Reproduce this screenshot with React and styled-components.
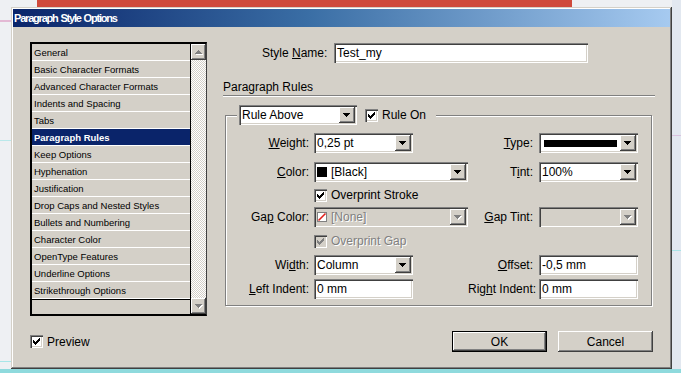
import React from 'react';
import styled, { createGlobalStyle, css } from 'styled-components';

const Global = createGlobalStyle`
  html, body { margin: 0; padding: 0; }
  body {
    width: 681px; height: 373px; overflow: hidden;
    background: #eceff2;
    font-family: "Liberation Sans", Arial, sans-serif;
  }
`;

const sunken = css`
  box-shadow: inset 1px 1px #808080, inset 2px 2px #404040, inset -1px -1px #fff, inset -2px -2px #d4d0c8;
`;
const raised = css`
  box-shadow: inset -1px -1px #404040, inset 1px 1px #fff, inset -2px -2px #808080, inset 2px 2px #d4d0c8;
`;
const disabledText = css`
  color: #808080;
  text-shadow: 1px 1px 0 #fff;
`;

const Desktop = styled.div`
  width: 681px; height: 373px; box-sizing: border-box; overflow: hidden;
  padding: 7px 9px 4px 11px;
  background:
    linear-gradient(#cf4a3c, #cf4a3c) 37px 0 / 535px 7px no-repeat,
    linear-gradient(#9a9a9a, #9a9a9a) 360px 0 / 1px 7px no-repeat,
    linear-gradient(#8fdadd, #8fdadd) 0 369px / 100% 4px no-repeat,
    linear-gradient(#a8e6e8, #a8e6e8) 0 361px / 11px 1px no-repeat,
    linear-gradient(#e3b9d4, #e3b9d4) 0 20px / 11px 2px no-repeat,
    linear-gradient(#b9e8ea, #b9e8ea) 0 140px / 11px 1px no-repeat,
    linear-gradient(#d9c3df, #d9c3df) 672px 135px / 9px 1px no-repeat,
    linear-gradient(#a9e3e6, #a9e3e6) 672px 250px / 9px 1px no-repeat,
    linear-gradient(to right, #eef0f3 0 672px, #e2e8f0 672px);
`;

const Window = styled.div`
  height: 100%; box-sizing: border-box;
  background: #d4d0c8;
  padding: 2px;
  display: flex; flex-direction: column;
  box-shadow: inset -1px -1px #404040, inset 1px 1px #d4d0c8, inset -2px -2px #808080, inset 2px 2px #fff;
`;

const TitleBar = styled.div`
  height: 18px; flex: none;
  display: flex; align-items: center;
  padding-left: 1px;
  background: linear-gradient(to right, #0a246a, #3a6ea5 45%, #a6caf0);
  color: #fff;
  font-weight: bold; font-size: 11px; letter-spacing: -1.2px; word-spacing: 1px;
`;

const Body = styled.div`
  flex: 1;
  padding: 15px 15px 0 17px;
  display: flex; flex-direction: column;
  font-size: 12px; color: #000;
`;

const Main = styled.div`
  display: flex; align-items: flex-start;
`;

const CategoryList = styled.div`
  width: 177px; height: 274px; box-sizing: border-box; flex: none;
  border: 2px solid #000; border-right: 1px solid #404040;
  display: flex;
`;

const ListItems = styled.div`
  width: 158px; border-right: 1px solid #000;
  display: flex; flex-direction: column;
`;

const ListItem = styled.div`
  height: 16px; flex: none;
  border-bottom: 1px solid #fff;
  padding-left: 2px;
  display: flex; align-items: center;
  font-size: 9.5px; white-space: nowrap;
  background: ${p => (p.$selected ? '#0a246a' : '#d4d0c8')};
  color: ${p => (p.$selected ? '#fff' : '#000')};
  font-weight: ${p => (p.$selected ? 'bold' : 'normal')};
`;

const ListFiller = styled.div`
  flex: 1; border-top: 1px solid #000;
`;

const ScrollTrack = styled.div`
  width: 15px;
  display: flex; flex-direction: column; justify-content: space-between;
  background: repeating-conic-gradient(#d4d0c8 0 25%, #fff 0 50%) 0 0 / 2px 2px;
`;

const ScrollButton = styled.div`
  height: 16px; background: #d4d0c8;
  display: flex; align-items: center; justify-content: center;
  ${raised}
`;

const RightPane = styled.div`
  width: 432px; margin-left: 16px;
  display: flex; flex-direction: column;
`;

const NameRow = styled.div`
  display: flex; align-items: center;
  margin-top: 1px; padding-left: 39px;
`;

const NameLabel = styled.span`
  width: 72px; white-space: nowrap;
`;

const Field = styled.div`
  position: relative;
  width: ${p => p.$w}px; height: 20px; box-sizing: border-box;
  padding: 2px 2px 2px 3px;
  display: flex; align-items: center;
  background: ${p => (p.$disabled ? '#d4d0c8' : '#fff')};
  white-space: nowrap;
  ${sunken}
`;

const FieldValue = styled.span`
  flex: 1; display: flex; align-items: center; gap: 4px;
  ${p => p.$disabled && disabledText}
`;

const DropButton = styled.div`
  width: 16px; height: 16px; flex: none;
  background: #d4d0c8;
  display: flex; align-items: center; justify-content: center;
  ${raised}
`;

const Swatch = styled.span`
  width: 10px; height: 10px; box-sizing: border-box; flex: none;
  background: ${p => p.$color};
  border: 1px solid #000;
  display: inline-flex;
`;

const TypeLine = styled.span`
  flex: 1; height: 7px; background: #000; margin: 0 3px 0 2px;
`;

const SectionHeading = styled.div`
  margin-top: 17px; height: 15px; line-height: 15px;
`;

const EtchedLine = styled.div`
  height: 1px; background: #808080; border-bottom: 1px solid #fff;
`;

const GroupBox = styled.div`
  margin: 18px 3px 0 2px;
  border: 1px solid #808080;
  box-shadow: inset 1px 1px #fff, 1px 1px #fff;
  padding-bottom: 6px;
`;

const GroupLegend = styled.div`
  display: flex; align-items: center; gap: 8px;
  width: fit-content;
  margin: -11px 0 0 11px;
  padding: 0 10px 0 2px;
  background: #d4d0c8;
`;

const FormRow = styled.div`
  display: grid;
  grid-template-columns: 88px 154px 71px 99px;
  align-items: center;
  height: ${p => p.$h || 20}px;
  margin-top: ${p => p.$mt || 0}px;
`;

const Label = styled.span`
  text-align: right; white-space: nowrap;
  padding-right: ${p => p.$pr || 5}px;
`;

const CheckRow = styled.label`
  display: inline-flex; align-items: center; gap: 4px;
  white-space: nowrap;
  ${p => p.$disabled && disabledText}
`;

const CheckBox = styled.span`
  width: 13px; height: 13px; box-sizing: border-box; flex: none;
  display: inline-flex; align-items: center; justify-content: center;
  background: ${p => (p.$disabled ? '#d4d0c8' : '#fff')};
  ${sunken}
`;

const Footer = styled.div`
  margin-top: 15px; padding-right: 2px;
  display: flex; align-items: center; justify-content: space-between;
  height: 21px;
`;

const Buttons = styled.div`
  display: flex; gap: 11px;
`;

const Button = styled.div`
  width: 95px; height: 21px; box-sizing: border-box;
  display: flex; align-items: center; justify-content: center;
  background: #d4d0c8;
  ${p =>
    p.$default
      ? css`
          border: 1px solid #000;
          ${raised}
        `
      : raised}
`;

const Arrow = ({ disabled }) => (
  <svg width="8" height="5" viewBox="0 0 8 5">
    {disabled && <path d="M1 1h7v1H1zM2 2h5v1H2zM3 3h3v1H3zM4 4h1v1H4z" fill="#fff" />}
    <path d="M0 0h7v1H0zM1 1h5v1H1zM2 2h3v1H2zM3 3h1v1H3z" fill={disabled ? '#808080' : '#000'} />
  </svg>
);

const UpArrow = () => (
  <svg width="8" height="5" viewBox="0 0 8 5">
    <path d="M4 1h1v1H4zM3 2h3v1H3zM2 3h5v1H2zM1 4h7v1H1z" fill="#fff" />
    <path d="M3 0h1v1H3zM2 1h3v1H2zM1 2h5v1H1zM0 3h7v1H0z" fill="#808080" />
  </svg>
);

const Check = ({ disabled }) => (
  <svg width="7" height="7" viewBox="0 0 7 7">
    <path
      d="M6 0h1v1H6zM5 1h2v1H5zM0 2h1v1H0zM4 2h3v1H4zM0 3h2v1H0zM3 3h3v1H3zM0 4h5v1H0zM1 5h3v1H1zM2 6h1v1H2z"
      fill={disabled ? '#808080' : '#000'}
    />
  </svg>
);

const NoneSwatch = () => (
  <svg width="10" height="10" viewBox="0 0 10 10">
    <rect x="0.5" y="0.5" width="9" height="9" fill="#fff" stroke="#808080" />
    <path d="M1.5 8.5L8.5 1.5" stroke="#e0201c" strokeWidth="1.6" />
  </svg>
);

const Checkbox = ({ checked, disabled, children }) => (
  <CheckRow $disabled={disabled}>
    <CheckBox $disabled={disabled}>{checked && <Check disabled={disabled} />}</CheckBox>
    {children}
  </CheckRow>
);

const Select = ({ w, disabled, children }) => (
  <Field $w={w} $disabled={disabled}>
    <FieldValue $disabled={disabled}>{children}</FieldValue>
    <DropButton>
      <Arrow disabled={disabled} />
    </DropButton>
  </Field>
);

const TextBox = ({ w, children }) => (
  <Field $w={w}>
    <FieldValue>{children}</FieldValue>
  </Field>
);

const categories = [
  'General',
  'Basic Character Formats',
  'Advanced Character Formats',
  'Indents and Spacing',
  'Tabs',
  'Paragraph Rules',
  'Keep Options',
  'Hyphenation',
  'Justification',
  'Drop Caps and Nested Styles',
  'Bullets and Numbering',
  'Character Color',
  'OpenType Features',
  'Underline Options',
  'Strikethrough Options',
];

export default function App() {
  return (
    <>
      <Global />
      <Desktop>
        <Window>
          <TitleBar>Paragraph Style Options</TitleBar>
          <Body>
            <Main>
              <CategoryList>
                <ListItems>
                  {categories.map(c => (
                    <ListItem key={c} $selected={c === 'Paragraph Rules'}>
                      {c}
                    </ListItem>
                  ))}
                  <ListFiller />
                </ListItems>
                <ScrollTrack>
                  <ScrollButton>
                    <UpArrow />
                  </ScrollButton>
                  <ScrollButton>
                    <Arrow disabled />
                  </ScrollButton>
                </ScrollTrack>
              </CategoryList>

              <RightPane>
                <NameRow>
                  <NameLabel>
                    Style <u>N</u>ame:
                  </NameLabel>
                  <TextBox w={254}>Test_my</TextBox>
                </NameRow>

                <SectionHeading>Paragraph Rules</SectionHeading>
                <EtchedLine />

                <GroupBox>
                  <GroupLegend>
                    <Select w={118}>Rule Above</Select>
                    <Checkbox checked>Rule On</Checkbox>
                  </GroupLegend>

                  <FormRow $mt={8}>
                    <Label>
                      <u>W</u>eight:
                    </Label>
                    <Select w={99}>0,25 pt</Select>
                    <Label $pr={6}>
                      <u>T</u>ype:
                    </Label>
                    <Field $w={99}>
                      <TypeLine />
                      <DropButton>
                        <Arrow />
                      </DropButton>
                    </Field>
                  </FormRow>

                  <FormRow $mt={9}>
                    <Label>
                      <u>C</u>olor:
                    </Label>
                    <Select w={154}>
                      <Swatch $color="#000" />
                      [Black]
                    </Select>
                    <Label $pr={6}>
                      T<u>i</u>nt:
                    </Label>
                    <Select w={99}>100%</Select>
                  </FormRow>

                  <FormRow $mt={6} $h={13}>
                    <span />
                    <Checkbox checked>Overprint Stroke</Checkbox>
                  </FormRow>

                  <FormRow $mt={6}>
                    <Label>
                      Ga<u>p</u> Color:
                    </Label>
                    <Select w={154} disabled>
                      <NoneSwatch />
                      [None]
                    </Select>
                    <Label $pr={6}>
                      <u>G</u>ap Tint:
                    </Label>
                    <Select w={99} disabled />
                  </FormRow>

                  <FormRow $mt={7} $h={13}>
                    <span />
                    <Checkbox checked disabled>
                      Overprint Gap
                    </Checkbox>
                  </FormRow>

                  <FormRow $mt={8}>
                    <Label>
                      Wi<u>d</u>th:
                    </Label>
                    <Select w={99}>Column</Select>
                    <Label $pr={6}>
                      <u>O</u>ffset:
                    </Label>
                    <TextBox w={99}>-0,5 mm</TextBox>
                  </FormRow>

                  <FormRow $mt={4}>
                    <Label>
                      <u>L</u>eft Indent:
                    </Label>
                    <TextBox w={99}>0 mm</TextBox>
                    <Label $pr={6}>
                      Rig<u>h</u>t Indent:
                    </Label>
                    <TextBox w={99}>0 mm</TextBox>
                  </FormRow>
                </GroupBox>
              </RightPane>
            </Main>

            <Footer>
              <Checkbox checked>Preview</Checkbox>
              <Buttons>
                <Button $default>OK</Button>
                <Button>Cancel</Button>
              </Buttons>
            </Footer>
          </Body>
        </Window>
      </Desktop>
    </>
  );
}
